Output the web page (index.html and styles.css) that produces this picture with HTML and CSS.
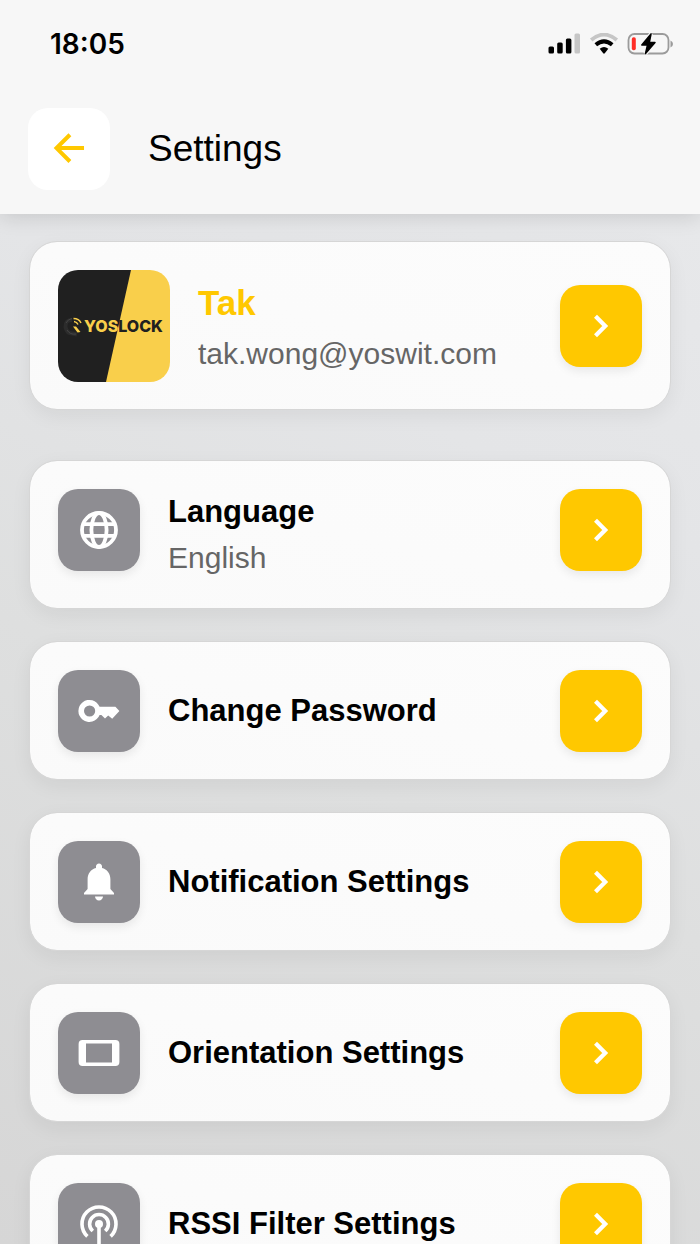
FILE: index.html
```html
<!DOCTYPE html>
<html lang="en">
<head>
<meta charset="utf-8">
<meta name="viewport" content="width=device-width, initial-scale=1">
<title>Settings</title>
<link rel="stylesheet" href="styles.css">
</head>
<body>
<svg class="defs" aria-hidden="true">
  <symbol id="chevron" viewBox="0 0 24 24"><path d="M9 6.700 14.300 12 9 17.300" fill="none" stroke="currentColor" stroke-width="2.300"/></symbol>
</svg>

<header class="header">
  <div class="status">
    <time class="clock">18:05</time>
    <div class="indicators">
      <svg width="34" height="22" viewBox="0 0 34 22" role="img" aria-label="Signal">
        <rect x="1.500" y="13.500" width="5.500" height="7" rx="1.500"/>
        <rect x="10.200" y="9.500" width="5.500" height="11" rx="1.500"/>
        <rect x="18.900" y="5.500" width="5.500" height="15" rx="1.500"/>
        <rect x="27.500" y="0.500" width="5.500" height="20" rx="1.500" fill="#c6c6c6"/>
      </svg>
      <svg width="30" height="22" viewBox="0 0 30 22" role="img" aria-label="Wi-Fi">
        <path d="M2.200 7Q15-3.800 27.800 7" fill="none" stroke="#c6c6c6" stroke-width="3.800"/>
        <path d="M6.800 11.800Q15 4.900 23.200 11.800" fill="none" stroke="#000" stroke-width="4"/>
        <path d="M10.700 15.800Q15 12.300 19.300 15.800L15.800 20.300Q15 21 14.200 20.300Z"/>
      </svg>
      <svg width="48" height="24" viewBox="0 0 48 24" role="img" aria-label="Battery low, charging">
        <rect x="1.500" y="2" width="40" height="19.500" rx="6" fill="none" stroke="#9b9b9b" stroke-width="1.800"/>
        <path d="M43.500 8.500Q46 9.500 46 12T43.500 15.500Z" fill="#9b9b9b"/>
        <rect x="4.800" y="5.300" width="4" height="13" rx="1.800" fill="#ff2d26"/>
        <path d="M24 2 14.800 13H20.500L18.500 21.500 28 10.500H22.300Z" stroke="#f7f7f7" stroke-width="4"/>
        <path d="M24 2 14.800 13H20.500L18.500 21.500 28 10.500H22.300Z" stroke="#000" stroke-width="1.500" stroke-linejoin="round"/>
      </svg>
    </div>
  </div>
  <div class="bar">
    <button class="back" type="button" aria-label="Back">
      <svg width="44" height="44" viewBox="0 0 24 24" aria-hidden="true"><path d="M20.200 11.500H5.500M12.500 4.200 5.200 11.500 12.500 18.800" fill="none" stroke="currentColor" stroke-width="2.200"/></svg>
    </button>
    <h1 class="heading">Settings</h1>
  </div>
</header>

<main class="content">
  <section class="card profile">
    <svg class="avatar" viewBox="0 0 112 112" role="img" aria-label="Yoslock">
      <path d="M0 0H74L49 112H0Z" fill="#202020"/>
      <path d="M73 0H112V112H48Z" fill="#f9cf4b"/>
      <path d="M14 50Q7 50 7.500 57Q9 64 15 63.500L19 64.500" fill="none" stroke="#2c2c2c" stroke-width="4"/>
      <path d="M8 53Q10 49 14 48.500M9 60Q12 65 18 64" fill="none" stroke="#454545"/>
      <path d="M15.500 48.500Q21 48.500 23 53M16 51.500Q19 52 20 54.500" fill="none" stroke="#f9cf4b" stroke-width="1.500"/>
      <path d="M15 56.500 18 56.500 22.500 62 19.500 62.500Z" fill="#f9cf4b"/>
      <text class="brand" x="26" y="62"><tspan fill="#f9cf4b">YOS</tspan><tspan fill="#202020">LOCK</tspan></text>
    </svg>
    <div class="text">
      <h2 class="name">Tak</h2>
      <p class="detail">tak.wong@yoswit.com</p>
    </div>
    <button class="go" type="button" aria-label="Open profile"><svg class="icon"><use href="#chevron"/></svg></button>
  </section>

  <ul class="list">
    <li class="card tall">
      <span class="tile"><svg class="icon" viewBox="0 0 24 24"><g fill="none" stroke="#fff" stroke-width="1.900"><circle cx="12" cy="12" r="8.500"/><ellipse cx="12" cy="12" rx="3.800" ry="8.500"/><path d="M4 9.100H20M4 14.900H20"/></g></svg></span>
      <div class="text">
        <h2 class="title">Language</h2>
        <p class="detail">English</p>
      </div>
      <button class="go" type="button" aria-label="Open language"><svg class="icon"><use href="#chevron"/></svg></button>
    </li>
    <li class="card">
      <span class="tile"><svg class="icon" viewBox="0 0 24 24"><path fill-rule="evenodd" d="M12.300 9.900A5.500 5.500 0 1 0 12.300 14H13.200L15 15.800 16.600 14.200 18.600 15.900 22.200 12 20.200 9.900ZM7.300 9.200a2.800 2.800 0 1 1 0 5.600a2.800 2.800 0 1 1 0-5.600Z" fill="#fff"/></svg></span>
      <div class="text"><h2 class="title">Change Password</h2></div>
      <button class="go" type="button" aria-label="Open change password"><svg class="icon"><use href="#chevron"/></svg></button>
    </li>
    <li class="card">
      <span class="tile"><svg class="icon" viewBox="0 0 24 24"><path d="M10 19.300h4c0 1.100-.9 2-2 2s-2-.9-2-2ZM12 2.800c-.9 0-1.500.7-1.500 1.500v.7C8 5.600 6.300 7.800 6.300 10.600V15.500L4.500 17.500V18.300H19.500V17.500L17.700 15.500V10.600C17.700 7.800 16 5.600 13.500 5V4.300c0-.8-.6-1.500-1.500-1.500Z" fill="#fff"/></svg></span>
      <div class="text"><h2 class="title">Notification Settings</h2></div>
      <button class="go" type="button" aria-label="Open notification settings"><svg class="icon"><use href="#chevron"/></svg></button>
    </li>
    <li class="card">
      <span class="tile"><svg class="icon" viewBox="0 0 24 24"><path fill-rule="evenodd" d="M3.800 5.500H20.200a2 2 0 0 1 2 2V16.500a2 2 0 0 1-2 2H3.800a2 2 0 0 1-2-2V7.500a2 2 0 0 1 2-2ZM5.500 7.300V16.700H18.500V7.300Z" fill="#fff"/></svg></span>
      <div class="text"><h2 class="title">Orientation Settings</h2></div>
      <button class="go" type="button" aria-label="Open orientation settings"><svg class="icon"><use href="#chevron"/></svg></button>
    </li>
    <li class="card">
      <span class="tile"><svg class="icon" viewBox="0 0 24 24"><g fill="none" stroke="#fff" stroke-width="1.800"><path d="M6.200 18.200A8.500 8.500 0 1 1 17.800 18.200"/><path d="M8.900 15.500A4.700 4.700 0 1 1 15.100 15.500"/><path d="M12 12V23"/></g><circle cx="12" cy="12" r="2" fill="#fff"/></svg></span>
      <div class="text"><h2 class="title">RSSI Filter Settings</h2></div>
      <button class="go" type="button" aria-label="Open RSSI filter settings"><svg class="icon"><use href="#chevron"/></svg></button>
    </li>
  </ul>
</main>
</body>
</html>
```
FILE: styles.css
```css
* {
  box-sizing: border-box;
}

html {
  height: 100%;
  overflow: hidden;
}

body {
  display: flex;
  flex-direction: column;
  height: 100%;
  margin: 0;
  overflow: hidden;
  font-family: "Liberation Sans", Arial, sans-serif;
  color: #000;
  background: linear-gradient(25deg, #d6d6d6, #dedfdf 40%, #e4e5e7 65%, #e9eaec);
}

h1, h2, p, ul {
  margin: 0;
  padding: 0;
}

button {
  padding: 0;
  border: 0;
}

.defs {
  position: absolute;
  width: 0;
  height: 0;
}

.header {
  flex: none;
  padding-bottom: 24px;
  background: #f7f7f7;
  box-shadow: 0 2px 20px rgba(0, 0, 0, 0.14);
}

.status {
  display: flex;
  align-items: center;
  justify-content: space-between;
  height: 88px;
  padding: 0 25px 0 50px;
}

.clock {
  font: 600 28px/32px Inter, sans-serif;
}

.indicators {
  display: flex;
  align-items: center;
  gap: 8px;
}

.bar {
  display: flex;
  align-items: center;
  gap: 38px;
  padding: 20px 28px 0;
}

.back {
  display: grid;
  place-items: center;
  width: 82px;
  height: 82px;
  border-radius: 20px;
  color: #ffc800;
  background: #fff;
}

.heading {
  font-size: 37px;
  font-weight: 400;
  line-height: 44px;
}

.content {
  flex: 1;
  min-height: 0;
  padding: 27px 29px 0;
}

.card {
  display: flex;
  align-items: center;
  gap: 28px;
  padding: 28px 28px 27px;
  border: 1px solid #d6d6d6;
  border-radius: 28px;
  background: linear-gradient(to top right, #fafafa, #fcfcfc);
  background-clip: padding-box;
  box-shadow: 0 6px 20px rgba(0, 0, 0, 0.06);
}

.profile {
  margin-bottom: 50px;
}

.tall {
  align-items: flex-start;
}

.avatar {
  flex: none;
  width: 112px;
  height: 112px;
  border-radius: 20px;
}

.brand {
  font: 800 16px Inter, sans-serif;
}

.text {
  flex: 1;
  min-width: 0;
}

.name {
  font-size: 35px;
  line-height: 56px;
  color: #ffc800;
}

.title {
  font-size: 31px;
  line-height: 46px;
}

.detail {
  font-size: 30px;
  line-height: 46px;
  color: #666;
}

.list {
  display: flex;
  flex-direction: column;
  gap: 32px;
  list-style: none;
}

.tile,
.go {
  display: grid;
  flex: none;
  place-items: center;
  width: 82px;
  height: 82px;
  border-radius: 20px;
  box-shadow: 0 4px 10px rgba(0, 0, 0, 0.08);
}

.tile {
  background: #8e8d92;
}

.go {
  color: #fff;
  background: #ffc800;
}

.icon {
  width: 48px;
  height: 48px;
}

.go .icon {
  width: 44px;
  height: 44px;
}
```
